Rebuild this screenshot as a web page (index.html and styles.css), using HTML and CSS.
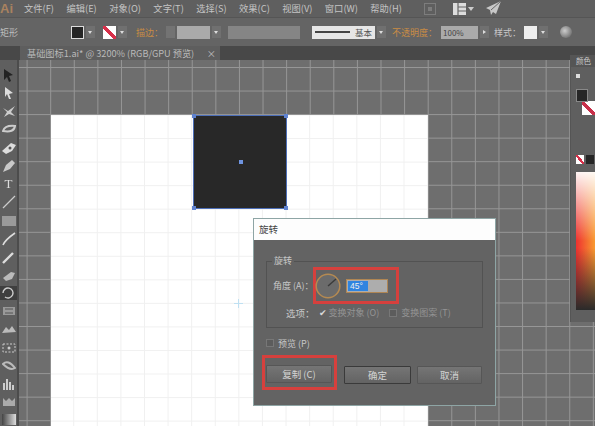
FILE: index.html
```html
<!DOCTYPE html>
<html lang="zh">
<head>
<meta charset="utf-8">
<title>旋转</title>
<link rel="stylesheet" href="styles.css">
</head>
<body>
<div class="app">
  <header class="menubar">
    <span class="logo">Ai</span>
    <nav class="menus">
      <span>文件(F)</span><span>编辑(E)</span><span>对象(O)</span><span>文字(T)</span><span>选择(S)</span><span>效果(C)</span><span>视图(V)</span><span>窗口(W)</span><span>帮助(H)</span>
    </nav>
    <div class="menu-icons">
      <svg width="12" height="12" viewBox="0 0 12 12"><rect x="0.5" y="0.5" width="11" height="11" fill="none" stroke="#7d7d7d"/><rect x="4" y="4" width="4" height="4" fill="#7d7d7d"/></svg>
      <svg width="21" height="12" viewBox="0 0 21 12"><rect x="0" y="0" width="13" height="12" fill="#ddd"/><path d="M5 0v12M5 4h8M5 8h8" stroke="#666" stroke-width="1.2"/><path d="M15 4h6l-3 4z" fill="#ccc"/></svg>
      <svg width="15" height="15" viewBox="0 0 15 15"><path d="M15 0L0 7l4 2 1 5 2-3 3 2z" fill="#c8c8c8"/><path d="M15 0L5 9" stroke="#666"/></svg>
    </div>
  </header>

  <div class="controlbar">
    <span class="ctl-label shape">矩形</span>
    <span class="swatch dark"></span><span class="drop"></span>
    <span class="swatch none"></span><span class="drop"></span>
    <span class="ctl-orange stroke-label">描边：</span>
    <span class="spin"></span>
    <span class="field weight"></span><span class="drop"></span>
    <span class="field wide"></span>
    <span class="brush"><i></i><b>基本</b></span><span class="drop"></span>
    <span class="ctl-orange opacity-label">不透明度：</span>
    <span class="field pct">100%</span><span class="drop play"></span>
    <span class="ctl-label style-label">样式：</span>
    <span class="swatch white"></span><span class="drop"></span>
    <span class="globe"></span>
  </div>

  <div class="tabstrip">
    <div class="tab"><span>基础图标1.ai* @ 3200% (RGB/GPU 预览)</span><em>×</em></div>
  </div>

  <div class="workspace">
    <aside class="tools">
      <svg class="t" viewBox="0 0 14 14"><path d="M2 1l9 6-4 1 2 5-2 1-2-5-3 3z" fill="#222"/></svg>
      <svg class="t" viewBox="0 0 14 14"><path d="M3 1l8 6-4 1 2 5-2 0-2-5-2 3z" fill="#ddd"/></svg>
      <svg class="t" viewBox="0 0 14 14"><path d="M1 4l5 3 7-5-4 6 4 4-6-2-5 3 3-5z" fill="#ccc"/></svg>
      <svg class="t" viewBox="0 0 14 14"><path d="M1 8q2-6 12-5-1 7-12 5z" fill="none" stroke="#ccc" stroke-width="2"/></svg>
      <svg class="t" viewBox="0 0 14 14"><path d="M0 10L9 2l5 2-4 6-6 3z" fill="#ddd"/><circle cx="8" cy="7" r="1.5" fill="#555"/></svg>
      <svg class="t" viewBox="0 0 14 14"><path d="M1 13l3-7 6-5 3 3-5 6z" fill="#c9c9c9"/></svg>
      <span class="t glyph">T</span>
      <svg class="t" viewBox="0 0 14 14"><path d="M1 13L13 1" stroke="#ccc" stroke-width="1.2"/></svg>
      <svg class="t" viewBox="0 0 14 14"><rect x="0" y="2" width="14" height="10" fill="#9a9a9a"/></svg>
      <svg class="t" viewBox="0 0 14 14"><path d="M1 13q2-5 12-12" fill="none" stroke="#ddd" stroke-width="1.6"/></svg>
      <svg class="t" viewBox="0 0 14 14"><path d="M1 13L11 3" stroke="#ddd" stroke-width="2.4"/></svg>
      <svg class="t" viewBox="0 0 14 14"><path d="M1 10l8-6 4 1-3 6-6 2z" fill="#bbb"/></svg>
      <span class="t active"><svg viewBox="0 0 14 14"><path d="M2 7a5 5 0 1 1 2 4" fill="none" stroke="#ccc" stroke-width="1.4"/></svg></span>
      <svg class="t" viewBox="0 0 14 14"><rect x="1" y="3" width="12" height="8" fill="#999"/><path d="M3 5h8M3 9h8" stroke="#555"/></svg>
      <svg class="t" viewBox="0 0 14 14"><path d="M0 10l4-6 3 3 3-4 4 6z" fill="#bbb"/></svg>
      <svg class="t" viewBox="0 0 14 14"><path d="M1 3h12v8H1z" fill="none" stroke="#ccc" stroke-dasharray="2 1.5"/><circle cx="7" cy="7" r="1.5" fill="#ccc"/></svg>
      <svg class="t" viewBox="0 0 14 14"><path d="M1 5q5-5 12 4-5 3-12-4z" fill="none" stroke="#bbb" stroke-width="2"/></svg>
      <svg class="t" viewBox="0 0 14 14"><path d="M2 13V6M5 13V2M8 13V5M11 13V8" stroke="#ccc" stroke-width="2"/></svg>
      <svg class="t" viewBox="0 0 14 14"><path d="M1 3l3 3 3-3 3 3 3-3v8H1z" fill="#aaa"/></svg>
      <span class="t gradient-tool"></span>
    </aside>

    <main class="canvas">
      <div class="artboard">
        <span class="cross"></span>
      </div>
      <div class="shape-square">
        <i class="h tl"></i><i class="h tr"></i><i class="h bl"></i><i class="h br"></i><i class="center"></i>
      </div>

      <section class="dialog">
        <h1 class="dialog-title">旋转</h1>
        <div class="group">
          <span class="legend">旋转</span>
          <div class="angle-row">
            <label>角度 (A)：</label>
            <div class="mark angle-mark">
              <svg class="dial" width="26" height="26" viewBox="0 0 26 26"><circle cx="13" cy="13" r="11.8" fill="#6b6b6b" stroke="#b58a52" stroke-width="1.5"/><path d="M13 13l8-7" stroke="#3a3a3a" stroke-width="1.4"/></svg>
              <div class="angle-input"><span>45°</span></div>
            </div>
          </div>
          <div class="options-row">
            <span>选项：</span>
            <span class="opt"><b class="tick">✔</b>变换对象 (O)</span>
            <span class="opt"><i class="box"></i>变换图案 (T)</span>
          </div>
        </div>
        <div class="preview"><i class="box"></i>预览 (P)</div>
        <div class="actions">
          <div class="mark copy-mark"><button class="btn">复制 (C)</button></div>
          <button class="btn primary">确定</button>
          <button class="btn">取消</button>
        </div>
      </section>

      <aside class="panel">
        <div class="panel-head">颜色</div>
        <div class="panel-body">
          <i class="dots"></i>
          <div class="fill-swatch"></div>
          <i class="stroke-none"></i>
          <div class="swatch-row"><i class="s-none"></i><i class="s-dark"></i><i class="s-white"></i></div>
          <div class="spectrum"></div>
        </div>
      </aside>
    </main>
  </div>
</div>
</body>
</html>
```

FILE: styles.css
```css
* { box-sizing: border-box; }
html, body { margin: 0; padding: 0; }
body {
  width: 595px;
  height: 426px;
  overflow: hidden;
  background: #666;
  font-family: "Noto Sans CJK SC", "Liberation Sans", sans-serif;
  color: #c8c8c8;
}
.app {
  width: 595px;
  height: 426px;
  display: flex;
  flex-direction: column;
  filter: blur(0.75px);
  overflow: hidden;
}

/* Menu bar */
.menubar {
  height: 17px;
  flex: none;
  display: flex;
  align-items: center;
  background: #5f5f5f;
  position: relative;
}
.logo {
  width: 20px;
  font: 600 13px "Liberation Sans", sans-serif;
  color: #a9825f;
  flex: none;
}
.menus { display: flex; gap: 12.4px; font-size: 9.3px; line-height: 17px; color: #c4c4c4; margin-left: 4px; white-space: nowrap; }
.menu-icons { display: flex; align-items: center; margin-left: 22px; gap: 17px; }
.menu-icons svg:last-child { margin-left: -5px; }

/* Control bar */
.controlbar {
  height: 29px;
  flex: none;
  display: flex;
  align-items: center;
  background: #646464;
  border-top: 1px solid #555;
  font-size: 9px;
  white-space: nowrap;
}
.shape { width: 71px; color: #bdbdbd; }
.swatch { width: 13px; height: 13px; flex: none; border: 1px solid #ddd; }
.swatch.dark { background: #262626; }
.swatch.none { background: linear-gradient(to top right, #fff 42%, #d8304a 42%, #d8304a 58%, #fff 58%); margin-left: 8px; border: 0; }
.swatch.white { background: #eee; margin-left: 5px; border: 0; }
.drop {
  width: 9px; height: 12px; margin-left: 2px; flex: none;
  background: #707070;
  position: relative;
}
.drop::after {
  content: ""; position: absolute; left: 2px; top: 5px;
  border-left: 2.5px solid transparent; border-right: 2.5px solid transparent; border-top: 3px solid #ddd;
}
.drop.play::after { border: 0; border-left: 3px solid #ddd; border-top: 2.5px solid transparent; border-bottom: 2.5px solid transparent; left: 3px; top: 4px; }
.ctl-orange { color: #c98c45; flex: none; }
.stroke-label { width: 30px; margin-left: 9px; }
.spin { width: 9px; height: 12px; background: #737373; flex: none; }
.field { height: 13px; flex: none; background: #aaa; color: #444; font-size: 8px; line-height: 13px; padding-left: 2px; }
.weight { width: 33px; margin-left: 2px; }
.wide { width: 72px; margin-left: 7px; background: #858585; }
.brush {
  width: 63px; height: 13px; margin-left: 12px; flex: none;
  background: #e6e6e6; display: flex; align-items: center; color: #555; font-size: 8.5px; padding: 0 3px;
}
.brush i { width: 38px; height: 2px; background: #444; margin-right: 5px; }
.brush b { font-weight: 400; }
.opacity-label { margin-left: 6px; width: 49px; }
.pct { width: 37px; }
.style-label { margin-left: 5px; width: 25px; }
.globe {
  width: 12px; height: 12px; border-radius: 50%; margin-left: 12px; flex: none;
  background: radial-gradient(circle at 40% 40%, #ccc, #555);
}

/* Document tab */
.tabstrip { height: 14px; flex: none; background: #484848; padding-left: 20px; }
.tab {
  width: 200px; height: 14px; background: #5e5e5e; color: #b9b9b9;
  font-size: 9.2px; line-height: 14px; display: flex; justify-content: space-between; padding: 0 4px 0 7px; white-space: nowrap;
}
.tab em { font-style: normal; }

/* Workspace */
.workspace { flex: 1; display: flex; min-height: 0; }
.tools {
  width: 19px; flex: none; background: #5f5f5f; border-right: 2px solid #4c4c4c;
  display: flex; flex-direction: column; align-items: center; padding-top: 8px; gap: 4.2px;
}
.t { width: 14px; height: 14px; flex: none; display: block; }
.glyph { font: 13px/14px "Liberation Serif", serif; color: #ddd; text-align: center; }
.active { background: #3f3f3f; width: 17px; }
.active svg { width: 14px; height: 14px; display: block; margin-left: 1px; }
.gradient-tool { background: linear-gradient(to right, #444, #ddd); height: 11px; }

.canvas {
  flex: 1;
  position: relative;
  background-color: #6e6e6e;
  background-image:
    linear-gradient(to right, #969696 1.4px, transparent 1.4px),
    linear-gradient(to bottom, #969696 1.4px, transparent 1.4px);
  background-size: 23.6px 23.55px;
  background-position: 7.6px 7px;
}
.artboard {
  position: absolute; left: 32px; top: 55px; width: 377px; height: 311px;
  background-color: #fff;
  background-image:
    linear-gradient(to right, #f0f0f0 1px, transparent 1px),
    linear-gradient(to bottom, #f0f0f0 1px, transparent 1px);
  background-size: 23.6px 23.55px;
  background-position: -1.4px -0.5px;
}
.cross {
  position: absolute; left: 183px; top: 184px; width: 9px; height: 9px;
  background:
    linear-gradient(#bfe0f2, #bfe0f2) center / 9px 1px no-repeat,
    linear-gradient(#bfe0f2, #bfe0f2) center / 1px 9px no-repeat;
}
.shape-square { position: absolute; left: 174px; top: 55px; width: 94px; height: 94px; background: #282828; border: 1px solid #4d6fb8; }
.h { position: absolute; width: 4px; height: 4px; background: #5f82cf; }
.tl { left: -2px; top: -2px; } .tr { right: -2px; top: -2px; }
.bl { left: -2px; bottom: -2px; } .br { right: -2px; bottom: -2px; }
.center { position: absolute; left: 45px; top: 44px; width: 4px; height: 4px; background: #6f94e0; }

/* Dialog */
.dialog {
  position: absolute; left: 234px; top: 158px; width: 243px; height: 188px;
  background: #636363; border: 1px solid #8ea5a5;
  display: flex; flex-direction: column; color: #c8c8c8; font-size: 9px;
}
.dialog-title { margin: 0; height: 21px; flex: none; background: #fdfdfd; color: #444; font-size: 9.5px; font-weight: 400; line-height: 20px; padding-left: 5px; }
.group { position: relative; margin: 21px 12px 0; height: 67px; border: 1px solid #525252; padding: 0 0 0 6px; }
.legend { position: absolute; left: 5px; top: -7px; background: #636363; padding: 0 2px; line-height: 12px; }
.angle-row { display: flex; align-items: center; height: 41px; margin-top: 3px; }
.angle-row label { width: 40px; flex: none; white-space: nowrap; }
.mark { border: 3px solid #d6403d; }
.angle-mark { width: 86px; height: 37px; display: flex; align-items: center; gap: 5px; }
.dial { flex: none; margin-left: -1px; }
.angle-input { width: 42px; height: 14px; background: #adadad; border: 1px solid #b08654; padding: 1px; }
.angle-input span { display: block; width: 20px; height: 10px; background: #2f84e0; color: #eee; font: 8.5px/10px "Liberation Sans", sans-serif; padding-left: 2px; }
.options-row { display: flex; align-items: center; gap: 4px; color: #a4a4a4; padding-left: 13px; white-space: nowrap; line-height: 14px; font-size: 9px; }
.options-row > span:first-child { color: #c8c8c8; font-size: 9.5px; }
.opt { display: inline-flex; align-items: center; color: #949494; margin-right: 6px; }
.tick { color: #d8d8d8; font-size: 9px; margin-right: 2px; font-weight: 400; }
.box { display: inline-block; width: 8px; height: 8px; background: #5c5c5c; border: 1px solid #777; margin-right: 4px; flex: none; }
.preview { display: flex; align-items: center; margin: 9px 0 0 12px; height: 12px; }
.actions { display: flex; align-items: center; margin: 6px 0 0 8px; }
.copy-mark { width: 75px; height: 35px; padding: 7px 2px 0 1px; margin-right: 7px; }
.btn {
  display: block; width: 67px; height: 18px; padding: 0; font: 9.5px/16px "Noto Sans CJK SC", sans-serif;
  color: #d4d4d4; background: linear-gradient(#757575, #636363); border: 1px solid #565656; border-radius: 1px;
}
.copy-mark .btn { width: 66px; }
.primary { border-color: #3a3a3a; margin-top: 4px; }
.actions > .btn:last-child { margin: 4px 0 0 6px; width: 65px; }

/* Panel */
.panel { position: absolute; left: 551px; top: -5px; width: 25px; height: 267px; background: #5f5f5f; border-left: 1px solid #555; }
.panel-head { height: 12px; background: #555; font-size: 7.5px; line-height: 12px; padding-left: 5px; white-space: nowrap; }
.panel-body { position: relative; padding: 7px 0 0 5px; overflow: hidden; }
.dots { display: block; width: 4px; height: 4px; background: #ddd; }
.fill-swatch { width: 12px; height: 13px; margin-top: 11px; background: #262626; border: 1px solid #888; position: relative; z-index: 1; }
.stroke-none {
  position: absolute; left: 11px; top: 34px; width: 14px; height: 14px;
  background: linear-gradient(to top right, #fff 36%, #c8304a 36%, #c8304a 56%, #fff 56%);
}
.swatch-row { display: flex; margin-top: 53px; gap: 2px; height: 9px; }
.swatch-row i { width: 8px; flex: none; }
.s-none { background: linear-gradient(to top right, #fff 40%, #d8304a 40%, #d8304a 60%, #fff 60%); }
.s-dark { background: #262626; }
.s-white { background: #fff; }
.spectrum {
  width: 20px; height: 138px; margin-top: 8px;
  background:
    linear-gradient(to bottom, rgba(255,255,255,.95), rgba(255,255,255,0) 50%),
    linear-gradient(to bottom, transparent 55%, #2a2a2a 100%),
    linear-gradient(to right, #ee3030, #f9a030);
}
```
